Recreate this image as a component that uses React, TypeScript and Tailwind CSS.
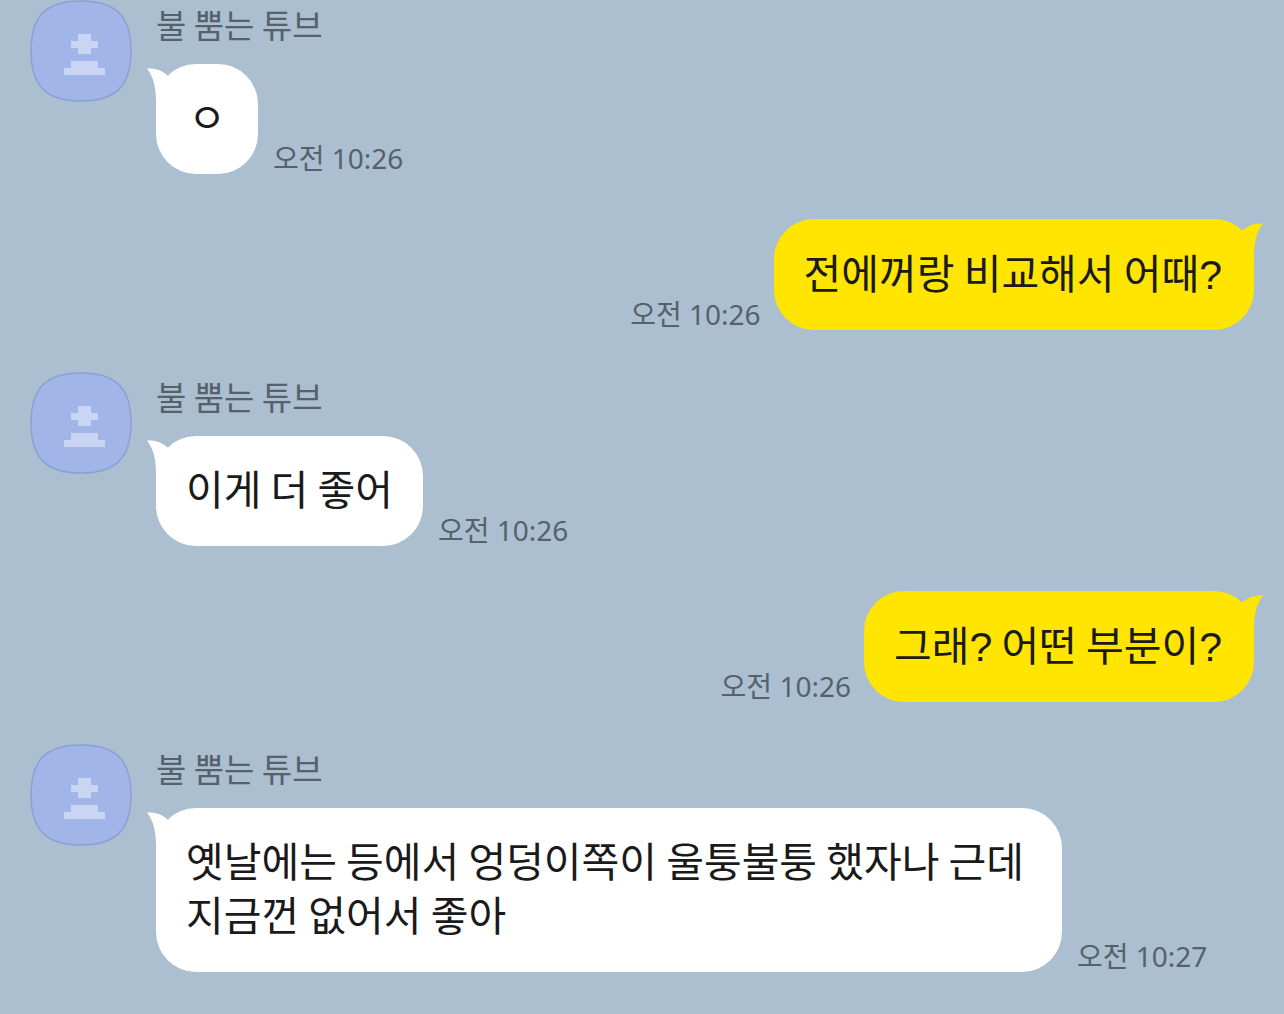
type Message = {
  id: number;
  mine: boolean;
  text: string;
  time: string;
};

const SENDER = '불 뿜는 튜브';

const messages: Message[] = [
  { id: 1, mine: false, text: 'ㅇ', time: '오전 10:26' },
  { id: 2, mine: true, text: '전에꺼랑 비교해서 어때?', time: '오전 10:26' },
  { id: 3, mine: false, text: '이게 더 좋어', time: '오전 10:26' },
  { id: 4, mine: true, text: '그래? 어떤 부분이?', time: '오전 10:26' },
  { id: 5, mine: false, text: '옛날에는 등에서 엉덩이쪽이 울퉁불퉁 했자나 근데 지금껀 없어서 좋아', time: '오전 10:27' },
];

function Avatar() {
  return (
    <svg className="size-[102px] shrink-0" viewBox="0 0 102 102" role="img" aria-label={SENDER}>
      <path
        d="M51 1C86 1 101 16 101 51C101 86 86 101 51 101C16 101 1 86 1 51C1 16 16 1 51 1Z"
        fill="#a1b5e8"
        stroke="#8ba1d3"
        strokeWidth="1.5"
      />
      {/* pixel figure: head, then base */}
      <path
        d="M48 34H61V41H68V48H61V54H48V48H41V41H48ZM41 61H68V68H75V75H34V68H41Z"
        fill="#c9d5f3"
      />
    </svg>
  );
}

// Drawn for the left side, mirrored for my own bubbles
function Tail({ mine }: { mine: boolean }) {
  return (
    <svg
      className={`absolute top-0 h-10 w-12 ${mine ? '-right-[9px] -scale-x-100 text-[#ffe500]' : '-left-[9px] text-white'}`}
      viewBox="0 0 48 40"
      aria-hidden="true"
    >
      <path d="M0 4.5C8 4 15 6 20.5 11.5L30 20V38H9C9 24 7 14 0 4.5Z" fill="currentColor" />
    </svg>
  );
}

// Question marks use the rounder latin glyph
function MessageText({ text }: { text: string }) {
  return (
    <p className="relative break-keep text-[41px] leading-[54px] text-[#1a1a1a]">
      {text.split(/(\?)/).map((part, i) =>
        part === '?' ? (
          <span key={i} className="font-['Liberation_Sans',sans-serif] leading-none">?</span>
        ) : (
          part
        )
      )}
    </p>
  );
}

function Bubble({ mine, text }: { mine: boolean; text: string }) {
  return (
    <div
      className={`relative w-fit min-w-[102px] max-w-[906px] rounded-[40px] pb-8 pl-[30px] ${
        mine ? 'bg-[#ffe500] pt-[25px] pr-8' : 'bg-white pt-6 pr-[30px]'
      } ${text.length > 1 ? 'text-left' : 'text-center'}`}
    >
      <Tail mine={mine} />
      <MessageText text={text} />
    </div>
  );
}

function Time({ value }: { value: string }) {
  return (
    <time className="shrink-0 font-['Noto_Sans','Noto_Sans_CJK_KR',sans-serif] text-[28px] leading-8 text-[#55626c]">
      {value}
    </time>
  );
}

export default function App() {
  return (
    <main className="min-h-screen bg-[#abbfd0] font-['Noto_Sans_CJK_KR',sans-serif]">
      <ul className="flex flex-col px-[30px]">
        {messages.map((m) =>
          m.mine ? (
            <li key={m.id} className="flex items-end justify-end gap-[13px] pb-[42px]">
              <Time value={m.time} />
              <Bubble mine text={m.text} />
            </li>
          ) : (
            <li key={m.id} className="flex items-start gap-6 pb-[45px] last:pb-10">
              <Avatar />
              <div className="min-w-0">
                <p className="mb-4 text-[33px] leading-[48px] text-[#55626c]">{SENDER}</p>
                <div className="flex items-end gap-[15px]">
                  <Bubble mine={false} text={m.text} />
                  <Time value={m.time} />
                </div>
              </div>
            </li>
          )
        )}
      </ul>
    </main>
  );
}
